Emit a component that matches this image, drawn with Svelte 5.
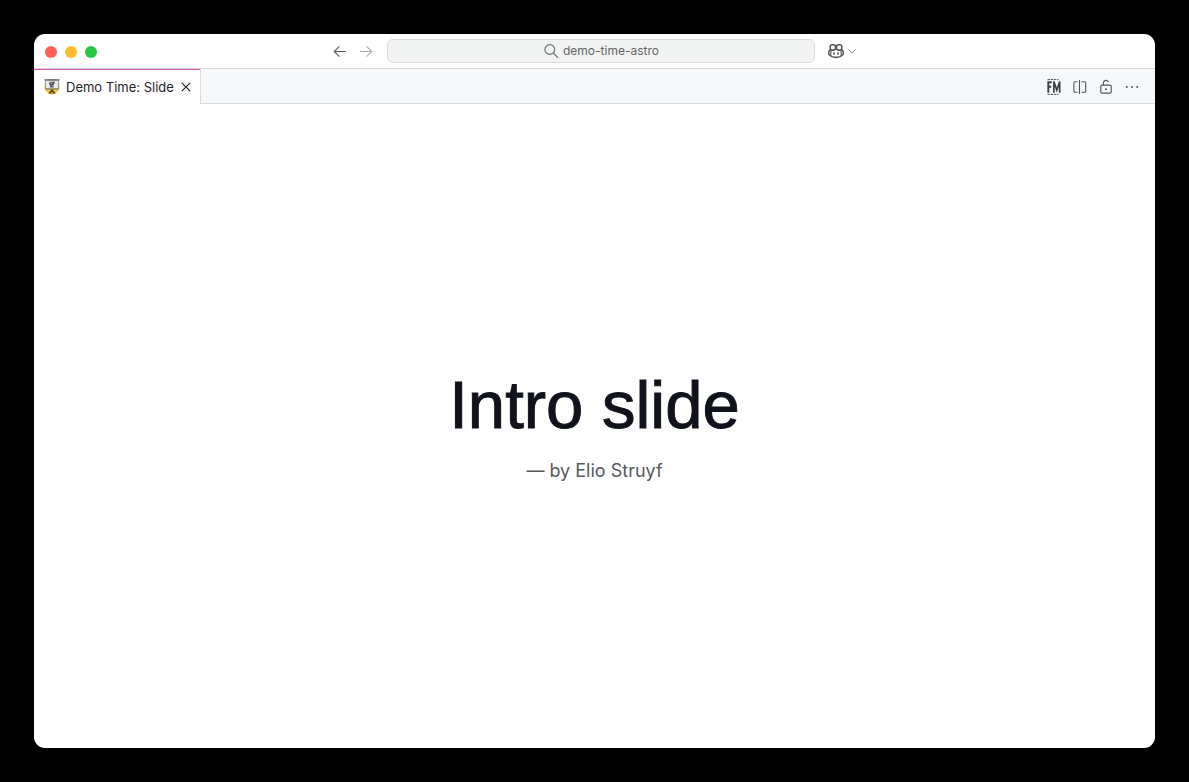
<script>
  let query = $state('demo-time-astro');
</script>

<div class="desktop">
  <div class="window">
    <header class="titlebar">
      <div class="lights">
        <button class="light red" aria-label="Close window"></button>
        <button class="light yellow" aria-label="Minimize window"></button>
        <button class="light green" aria-label="Zoom window"></button>
      </div>

      <div class="center">
        <button class="icon" aria-label="Go back">
          <svg width="16" height="16" viewBox="0 0 16 16" fill="none" stroke="#5c5f62" stroke-width="1.1">
            <path d="M14 8.5H2.4M7.4 3.3L2.2 8.5l5.2 5.2" />
          </svg>
        </button>
        <button class="icon" aria-label="Go forward">
          <svg width="16" height="16" viewBox="0 0 16 16" fill="none" stroke="#a9abad" stroke-width="1.1">
            <path d="M2 8.5h11.6M8.6 3.3l5.2 5.2-5.2 5.2" />
          </svg>
        </button>
        <button class="search">
          <svg width="16" height="16" viewBox="0 0 16 16" fill="none" stroke="#686b6e" stroke-width="1.1">
            <circle cx="6.8" cy="6.5" r="4.9" />
            <path d="M10.3 10l4.8 4.8" />
          </svg>
          <span>{query}</span>
        </button>
        <button class="copilot" aria-label="Copilot menu">
          <svg width="18" height="16" viewBox="0 0 18 16" fill="none" stroke="#56595c" stroke-width="1.6">
            <rect x="3.2" y="1.7" width="5.3" height="5.4" rx="2" />
            <rect x="9.5" y="1.7" width="5.3" height="5.4" rx="2" />
            <path d="M3.4 6.6C2.2 7.2 1.7 8 1.7 9v1.8c0 1.4 3.8 3.6 7.3 3.6s7.3-2.2 7.3-3.6V9c0-1-.5-1.8-1.7-2.4" />
            <path d="M3.8 7v5.8M14.2 7v5.8" stroke-width="1.2" />
            <path d="M7 9.2v2.6M11 9.2v2.6" stroke-width="1.6" />
          </svg>
          <svg width="10" height="16" viewBox="0 0 10 16" fill="none" stroke="#85888a" stroke-width="1">
            <path d="M1.5 6.5L5 10l3.5-3.5" />
          </svg>
        </button>
      </div>
      <div></div>
    </header>

    <div class="tabs">
      <div class="tab">
        <svg class="logo" width="16" height="16" viewBox="0 0 16 16">
          <circle cx="8" cy="7.6" r="7.6" fill="#f3c83a" />
          <path d="M8 10.5l4 3.6a7.6 7.6 0 0 1-8 0z" fill="#c99d1e" />
          <path d="M8 10.2v2M8 11.2l-2.8 3.2M8 11.2l2.8 3.2" fill="none" stroke="#3d3a30" stroke-width="1.4" />
          <rect x="1.6" y="1.2" width="12.8" height="8.6" fill="#e9eaec" stroke="#8a8a8a" stroke-width=".8" />
          <path d="M.5.9h15" stroke="#666" stroke-width="1.2" />
          <path d="M1.4 10h13.2" stroke="#7b745c" stroke-width=".9" />
          <path d="M5.4 3l5.5-.4-.4 2.2-1.1 1 .4 2.8H5.6l.7-2.2-1.2-1z" fill="#55575b" />
          <path d="M6.6 4.2h1.5M8.2 6.8h.8" stroke="#e9eaec" stroke-width=".8" />
        </svg>
        <span>Demo Time: Slide</span>
        <button class="icon" aria-label="Close tab">
          <svg width="16" height="16" viewBox="0 0 16 16" fill="none" stroke="#1f2328" stroke-width="1.2">
            <path d="M3.8 3.8l8.4 8.4M12.2 3.8l-8.4 8.4" />
          </svg>
        </button>
      </div>
      <div class="actions">
        <button class="icon" aria-label="Front Matter">
          <svg width="16" height="16" viewBox="0 0 16 16" fill="none" stroke="#3c3f42">
            <path d="M1.5.6h11M1.5 15.4h11" stroke-width=".9" stroke-dasharray="2.4 .8" />
            <path d="M2.3 2.3v11.4M1.4 3.2h4.3M2.3 7.8h3" stroke-width="1.9" />
            <path d="M7.9 13.7V2.6l2.9 8.6 2.9-8.6v11.1" stroke-width="1.7" />
          </svg>
        </button>
        <button class="icon" aria-label="Split editor">
          <svg width="16" height="16" viewBox="0 0 16 16" fill="none" stroke="#505356" stroke-width="1.1">
            <path d="M7.5 1v14M5.6 2.8H3.2a1.3 1.3 0 0 0-1.3 1.3v7.8a1.3 1.3 0 0 0 1.3 1.3h2.4M9.5 2.8h2.9a1.3 1.3 0 0 1 1.3 1.3v7.8a1.3 1.3 0 0 1-1.3 1.3H9.5" />
          </svg>
        </button>
        <button class="icon" aria-label="Unlock group">
          <svg width="16" height="16" viewBox="0 0 16 16" fill="none" stroke="#55585b" stroke-width="1.2">
            <rect x="2.8" y="6.2" width="10.4" height="8" rx="1.4" />
            <path d="M5.4 6.2V4a2.6 2.6 0 0 1 5-1" />
            <circle cx="8" cy="10.2" r="1" fill="#55585b" stroke="none" />
          </svg>
        </button>
        <button class="icon" aria-label="More actions">
          <svg width="16" height="16" viewBox="0 0 16 16" fill="#505356">
            <circle cx="2.8" cy="8" r="1" />
            <circle cx="8" cy="8" r="1" />
            <circle cx="13.2" cy="8" r="1" />
          </svg>
        </button>
      </div>
    </div>

    <main class="slide">
      <h1>Intro slide</h1>
      <p>— by Elio Struyf</p>
    </main>
  </div>
</div>

<style>
  :global(body) {
    margin: 0;
    background: #000;
  }

  .desktop {
    box-sizing: border-box;
    min-height: 100vh;
    padding: 34px;
    display: flex;
    background: #000;
    font-family: Inter, 'Liberation Sans', sans-serif;
  }

  .window {
    flex: 1;
    min-width: 0;
    display: flex;
    flex-direction: column;
    overflow: hidden;
    border-radius: 11px;
    background: #fff;
  }

  button {
    margin: 0;
    padding: 0;
    border: 0;
    background: none;
    font: inherit;
    color: inherit;
  }

  svg {
    display: block;
    flex: none;
  }

  .titlebar {
    display: grid;
    grid-template-columns: 1fr minmax(0, 525px) 1fr;
    align-items: center;
    height: 34px;
  }

  .lights {
    display: flex;
    gap: 8px;
    padding: 2px 0 0 11px;
  }

  .light {
    width: 12px;
    height: 12px;
    border-radius: 50%;
  }

  .red {
    background: #ff5f57;
  }

  .yellow {
    background: #febc2e;
  }

  .green {
    background: #28c840;
  }

  .center {
    display: flex;
    align-items: center;
    gap: 10px;
  }

  .search {
    box-sizing: border-box;
    flex: 1;
    display: flex;
    align-items: center;
    justify-content: center;
    gap: 4px;
    height: 24px;
    margin: 0 2px 0 3px;
    border: 1px solid #d9dbdd;
    border-radius: 6px;
    background: #f2f3f3;
    color: #626568;
    font-size: 12px;
    line-height: 16px;
  }

  .copilot {
    display: flex;
    align-items: center;
    gap: 2px;
  }

  .tabs {
    display: flex;
    justify-content: space-between;
    height: 36px;
    background: #f6f8fa;
    box-shadow: inset 0 1px #d4dbe1, inset 0 -1px #d4dbe1;
  }

  .tab {
    box-sizing: border-box;
    display: flex;
    align-items: center;
    gap: 4px;
    padding: 0 6px 0 10px;
    border-top: 1px solid #efd0e2;
    border-right: 1px solid #d4dbe1;
    background: #fff;
    box-shadow: inset 0 1px 0 0 #d0539f;
    color: #1f2328;
    font-size: 13px;
    line-height: 16px;
    white-space: nowrap;
  }

  .logo {
    margin-right: 2px;
  }

  .actions {
    display: flex;
    align-items: center;
    gap: 10px;
    padding: 1px 15px 0 0;
  }

  .slide {
    flex: 1;
    display: flex;
    flex-direction: column;
    align-items: center;
    justify-content: center;
    gap: 16px;
    padding: 18px 16px 16px;
    text-align: center;
  }

  h1 {
    margin: 0;
    color: #10121c;
    font-family: 'Liberation Sans', Arial, sans-serif;
    font-size: 67px;
    font-weight: 400;
    line-height: 72px;
    -webkit-text-stroke: 1px #10121c;
  }

  p {
    margin: 0;
    color: #57595e;
    font-size: 18px;
    line-height: 28px;
  }
</style>
